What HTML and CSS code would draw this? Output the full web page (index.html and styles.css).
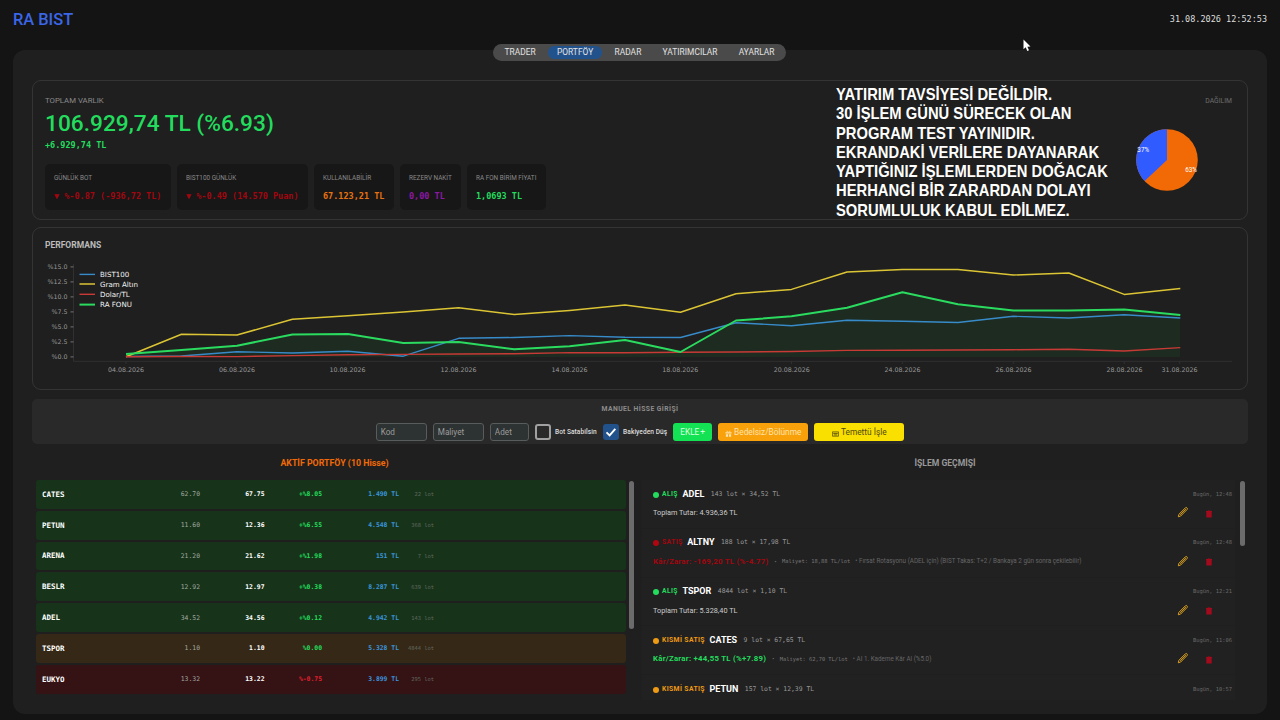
FILE: index.html
```html
<!DOCTYPE html>
<html lang="tr">
<head>
  <meta charset="UTF-8" />
  <meta name="viewport" content="width=device-width, initial-scale=1.0"/>
  <title>RA BIST</title>
  <link rel="stylesheet" href="styles.css">
</head>
<body>

<!-- shared icons -->
<svg class="sprite" aria-hidden="true">
  <symbol id="pencil" viewBox="0 0 12 12">
    <path d="M1.3 10.8 L1.9 8.3 L8.4 1.8 Q9.2 1.1 10 1.9 Q10.8 2.7 10.1 3.5 L3.7 10 Z M3.2 8.7 L8.9 3" fill="none" stroke="#d9a01e" stroke-width="1" stroke-linejoin="round"/>
  </symbol>
  <symbol id="trash" viewBox="0 0 8 8">
    <path d="M1 1 H2.6 V0.4 H5.4 V1 H7 V2 H6.7 V7.4 H1.3 V2 H1 Z" fill="#a30b1c"/>
  </symbol>
</svg>

<header>
  <h1>RA BIST</h1>
  <span class="clock">31.08.2026 12:52:53</span>
</header>

<main class="panel">
  <nav class="tabs">
    <a>TRADER</a>
    <a class="active">PORTFÖY</a>
    <a>RADAR</a>
    <a>YATIRIMCILAR</a>
    <a>AYARLAR</a>
  </nav>

  <section class="card summary">
    <div class="totals">
      <div class="caption">TOPLAM VARLIK</div>
      <div class="total">106.929,74 TL (%6.93)</div>
      <div class="gain">+6.929,74 TL</div>
      <div class="tiles">
        <div class="tile"><span>GÜNLÜK BOT</span><b class="down">▼ %-0.87 (-936,72 TL)</b></div>
        <div class="tile"><span>BIST100 GÜNLÜK</span><b class="down">▼ %-0.49 (14.570 Puan)</b></div>
        <div class="tile"><span>KULLANILABİLİR</span><b class="cash">67.123,21 TL</b></div>
        <div class="tile"><span>REZERV NAKİT</span><b class="reserve">0,00 TL</b></div>
        <div class="tile"><span>RA FON BİRİM FİYATI</span><b class="up">1,0693 TL</b></div>
      </div>
    </div>
    <div class="notice">
      <p>YATIRIM TAVSİYESİ DEĞİLDİR.</p>
      <p>30 İŞLEM GÜNÜ SÜRECEK OLAN</p>
      <p>PROGRAM TEST YAYINIDIR.</p>
      <p>EKRANDAKİ VERİLERE DAYANARAK</p>
      <p>YAPTIĞINIZ İŞLEMLERDEN DOĞACAK</p>
      <p>HERHANGİ BİR ZARARDAN DOLAYI</p>
      <p>SORUMLULUK KABUL EDİLMEZ.</p>
    </div>
    <div class="share">
      <div class="share-title">DAĞILIM</div>
      <svg class="pie" viewBox="-31 -31 62 62">
        <circle r="30.8" fill="#f26a05"/>
        <path d="M0 0 L0 -30.8 A30.8 30.8 0 0 0 -22.4 21.1 Z" fill="#2f5bff"/>
        <text x="-23.8" y="-8.4">37%</text>
        <text x="24" y="12.2">63%</text>
      </svg>
    </div>
  </section>

  <section class="card performance">
    <h2>PERFORMANS</h2>
    <svg class="chart" viewBox="45 258 1190 120">
      <path class="axis" d="M73.5 264 V361.3 H1232"/>
      <path class="ticks" d="M70.5 266.9h3M70.5 281.9h3M70.5 296.9h3M70.5 311.9h3M70.5 326.9h3M70.5 341.9h3M70.5 356.9h3"/>
      <path class="axis" d="M126 361v3M237 361v3M348 361v3M458.7 361v3M569.6 361v3M680.5 361v3M791.5 361v3M902.4 361v3M1013.3 361v3M1124.2 361v3M1179.7 361v3"/>
      <g class="ylabels">
        <text x="67.5" y="269.3">%15.0</text>
        <text x="67.5" y="284.3">%12.5</text>
        <text x="67.5" y="299.3">%10.0</text>
        <text x="67.5" y="314.3">%7.5</text>
        <text x="67.5" y="329.3">%5.0</text>
        <text x="67.5" y="344.3">%2.5</text>
        <text x="67.5" y="359.3">%0.0</text>
      </g>
      <g class="xlabels">
        <text x="126" y="371.9">04.08.2026</text>
        <text x="237" y="371.9">06.08.2026</text>
        <text x="347.5" y="371.9">10.08.2026</text>
        <text x="458.5" y="371.9">12.08.2026</text>
        <text x="569.5" y="371.9">14.08.2026</text>
        <text x="680.3" y="371.9">18.08.2026</text>
        <text x="791.7" y="371.9">20.08.2026</text>
        <text x="902.5" y="371.9">24.08.2026</text>
        <text x="1013.5" y="371.9">26.08.2026</text>
        <text x="1124.5" y="371.9">28.08.2026</text>
        <text x="1179.5" y="371.9">31.08.2026</text>
      </g>
      <path class="area" d="M126 354 L181.5 350 237 345.8 292.4 334.4 347.9 334 403.3 343 458.7 342 514.2 349.3 569.6 346.3 625 340 680.5 352 736 320.5 791.5 316.3 847 307.8 902.4 292.3 957.9 304.3 1013.3 310.5 1068.8 310.5 1124.2 309.5 1180.3 315 V357 H126 Z"/>
      <polyline class="bist" points="126,356.5 181.5,356 237,351.7 292.4,353 347.9,351.3 403.3,356.2 458.7,338.3 514.2,337.5 569.6,335.6 625,337.3 680.5,337.5 736,322.7 791.5,325.7 847,320.3 902.4,321.3 957.9,322.5 1013.3,316.3 1068.8,318 1124.2,314.7 1180.3,318"/>
      <polyline class="gold" points="126,356.7 181.5,334.2 237,335 292.4,319.3 347.9,315.7 403.3,312 458.7,307.8 514.2,314.5 569.6,310.4 625,305.1 680.5,312.3 736,293.8 791.5,289.4 847,272 902.4,269.5 957.9,269.5 1013.3,275 1068.8,273 1124.2,294.4 1180.3,288.5"/>
      <polyline class="dollar" points="126,356.7 181.5,356.5 237,356.6 292.4,355.6 347.9,354.8 403.3,354.4 458.7,354 514.2,353.8 569.6,352.6 625,352.7 680.5,352.3 736,352 791.5,351.5 847,350.4 902.4,350.3 957.9,350 1013.3,349.7 1068.8,349.3 1124.2,351 1180.3,347.6"/>
      <polyline class="fund" points="126,354 181.5,350 237,345.8 292.4,334.4 347.9,334 403.3,343 458.7,342 514.2,349.3 569.6,346.3 625,340 680.5,352 736,320.5 791.5,316.3 847,307.8 902.4,292.3 957.9,304.3 1013.3,310.5 1068.8,310.5 1124.2,309.5 1180.3,315"/>
      <g class="legend">
        <path class="bist" d="M79.5 274.4h15.5"/><text x="100" y="277">BIST100</text>
        <path class="gold" d="M79.5 284h15.5"/><text x="100" y="286.8">Gram Altın</text>
        <path class="dollar" d="M79.5 294.3h15.5"/><text x="100" y="297">Dolar/TL</text>
        <path class="fund" d="M79.5 304.6h15.5"/><text x="100" y="307.2">RA FONU</text>
      </g>
    </svg>
  </section>

  <section class="manual">
    <h3>MANUEL HİSSE GİRİŞİ</h3>
    <form>
      <input type="text" placeholder="Kod">
      <input type="text" placeholder="Maliyet">
      <input type="text" class="short" placeholder="Adet">
      <label class="check"><i></i>Bot Satabilsin</label>
      <label class="check checked"><i><svg viewBox="0 0 16 16"><path d="M3.5 8.4 L6.6 11.4 L12.3 4.8" fill="none" stroke="#fff" stroke-width="1.9"/></svg></i>Bakiyeden Düş</label>
      <button type="button" class="add">EKLE<em>+</em></button>
      <button type="button" class="split"><svg viewBox="0 0 8 8"><path d="M0.5 2.5h7v1.6h-7zM1 4.8h2.5v3H1zM4.5 4.8H7v3H4.5zM2 0.5l2 1.4 2-1.4v1.4H2z" fill="#ffe3b0"/></svg>Bedelsiz/Bölünme</button>
      <button type="button" class="dividend"><svg viewBox="0 0 8 8"><path d="M0.4 2.2h7.2v4.8H0.4z" fill="none" stroke="#50480a" stroke-width="0.9"/><path d="M1.4 4h5.2M2 5.6h4" stroke="#50480a" stroke-width="0.9"/></svg>Temettü İşle</button>
    </form>
  </section>

  <div class="columns">
    <section class="portfolio">
      <h3>AKTİF PORTFÖY (10 Hisse)</h3>
      <div class="scroll">
        <div class="rows">
          <div class="row"><b>CATES</b><span>62.70</span><strong>67.75</strong><em>+%8.05</em><i>1.490 TL</i><small>22 lot</small></div>
          <div class="row"><b>PETUN</b><span>11.60</span><strong>12.36</strong><em>+%6.55</em><i>4.548 TL</i><small>368 lot</small></div>
          <div class="row"><b>ARENA</b><span>21.20</span><strong>21.62</strong><em>+%1.98</em><i>151 TL</i><small>7 lot</small></div>
          <div class="row"><b>BESLR</b><span>12.92</span><strong>12.97</strong><em>+%0.38</em><i>8.287 TL</i><small>639 lot</small></div>
          <div class="row"><b>ADEL</b><span>34.52</span><strong>34.56</strong><em>+%0.12</em><i>4.942 TL</i><small>143 lot</small></div>
          <div class="row flat"><b>TSPOR</b><span>1.10</span><strong>1.10</strong><em>%0.00</em><i>5.328 TL</i><small>4844 lot</small></div>
          <div class="row loss"><b>EUKYO</b><span>13.32</span><strong>13.22</strong><em>%-0.75</em><i>3.899 TL</i><small>295 lot</small></div>
        </div>
        <div class="bar"></div>
      </div>
    </section>

    <section class="history">
      <h3>İŞLEM GEÇMİŞİ</h3>
      <div class="scroll">
        <div class="trades">
          <div class="trade buy">
            <div class="head"><i class="dot"></i><span class="kind">ALIŞ</span><b>ADEL</b><span class="qty">143 lot × 34,52 TL</span><time>Bugün, 12:48</time></div>
            <div class="detail"><span class="sum">Toplam Tutar: 4.936,36 TL</span><div class="tools"><svg class="pencil"><use href="#pencil"/></svg><svg class="trash"><use href="#trash"/></svg></div></div>
          </div>
          <div class="trade sell">
            <div class="head"><i class="dot"></i><span class="kind">SATIŞ</span><b>ALTNY</b><span class="qty">188 lot × 17,98 TL</span><time>Bugün, 12:48</time></div>
            <div class="detail"><span class="profit">Kâr/Zarar: -169,20 TL (%-4.77)</span><span class="sep">•</span><span class="cost">Maliyet: 18,88 TL/lot</span><span class="note">• Fırsat Rotasyonu (ADEL için) (BIST Takas: T+2 / Bankaya 2 gün sonra çekilebilir)</span><div class="tools"><svg class="pencil"><use href="#pencil"/></svg><svg class="trash"><use href="#trash"/></svg></div></div>
          </div>
          <div class="trade buy">
            <div class="head"><i class="dot"></i><span class="kind">ALIŞ</span><b>TSPOR</b><span class="qty">4844 lot × 1,10 TL</span><time>Bugün, 12:21</time></div>
            <div class="detail"><span class="sum">Toplam Tutar: 5.328,40 TL</span><div class="tools"><svg class="pencil"><use href="#pencil"/></svg><svg class="trash"><use href="#trash"/></svg></div></div>
          </div>
          <div class="trade partial">
            <div class="head"><i class="dot"></i><span class="kind">KISMİ SATIŞ</span><b>CATES</b><span class="qty">9 lot × 67,65 TL</span><time>Bugün, 11:06</time></div>
            <div class="detail"><span class="profit">Kâr/Zarar: +44,55 TL (%+7.89)</span><span class="sep">•</span><span class="cost">Maliyet: 62,70 TL/lot</span><span class="note">• AI 1. Kademe Kâr Al (%5.0)</span><div class="tools"><svg class="pencil"><use href="#pencil"/></svg><svg class="trash"><use href="#trash"/></svg></div></div>
          </div>
          <div class="trade partial">
            <div class="head"><i class="dot"></i><span class="kind">KISMİ SATIŞ</span><b>PETUN</b><span class="qty">157 lot × 12,39 TL</span><time>Bugün, 10:57</time></div>
          </div>
        </div>
        <div class="bar"></div>
      </div>
    </section>
  </div>
</main>

<svg class="cursor" viewBox="0 0 9 13"><path d="M0.5 0.5 V10.2 L2.7 8.3 L4.3 12 L6 11.3 L4.4 7.7 L7.5 7.5 Z" fill="#fff"/></svg>

</body>
</html>
```

FILE: styles.css
```css
* {
  box-sizing: border-box;
}
body {
  margin: 0;
  height: 720px;
  overflow: hidden;
  background: #141414;
  color: #eee;
  font-family: Roboto, "Liberation Sans", sans-serif;
  font-size: 8px;
}
h1, h2, h3, p {
  margin: 0;
}
em, i {
  font-style: normal;
}
.sprite {
  display: none;
}
header {
  height: 50px;
  padding: 9px 13px 0;
  display: flex;
  justify-content: space-between;
}
h1 {
  font-size: 16.4px;
  line-height: 21px;
  font-weight: 500;
  color: #3b66e8;
}
.clock {
  font-family: "DejaVu Sans Mono", monospace;
  font-size: 8.5px;
  line-height: 20px;
  color: #ddd;
}
.panel {
  display: flow-root;
  height: 664px;
  margin: 0 13px;
  padding: 0 19px;
  background: #1f1f1f;
  border-radius: 12px;
}

/* tabs */
.tabs {
  width: 293px;
  height: 17px;
  margin: -6px 0 19px 461px;
  padding: 2px;
  display: flex;
  justify-content: center;
  gap: 4px;
  background: #4a4a4a;
  border-radius: 9px;
}
.tabs a {
  padding: 0 8.6px;
  font-size: 8.4px;
  line-height: 13px;
  letter-spacing: 0.04px;
  color: #e2e2e2;
  border-radius: 6px;
}
.tabs .active {
  background: #22528c;
}

/* cards */
.card {
  width: 1215.5px;
  border: 1px solid #343434;
  border-radius: 9px;
}
.summary {
  height: 140px;
  display: flex;
}
.totals {
  width: 803px;
  padding: 14px 0 0 12px;
}
.caption {
  font-size: 7.8px;
  line-height: 11px;
  color: #8a8a8a;
}
.total {
  margin-top: 4px;
  font-size: 22.7px;
  line-height: 27px;
  font-weight: 500;
  color: #23dc5d;
}
.gain {
  margin-top: 3px;
  font-family: "DejaVu Sans Mono", monospace;
  font-size: 8.5px;
  line-height: 11px;
  font-weight: bold;
  color: #23dc5d;
}
.tiles {
  margin-top: 13px;
  display: grid;
  grid-template-columns: 126px 131px 80px 61px 79px;
  gap: 6px;
}
.tile {
  height: 46px;
  padding: 9px 0 0 9px;
  background: #171717;
  border-radius: 5px;
  white-space: nowrap;
}
.tile span {
  display: block;
  font-size: 6.4px;
  line-height: 10px;
  color: #8a8a8a;
}
.tile b {
  display: block;
  margin-top: 8px;
  font-family: "DejaVu Sans Mono", monospace;
  font-size: 8.5px;
  line-height: 10px;
}
.tile .down {
  color: #a3060f;
}
.tile .cash {
  color: #e8720f;
}
.tile .reserve {
  color: #8d18a5;
}
.tile .up {
  color: #23dc5d;
}
.notice {
  width: 300px;
  padding-top: 4px;
  font-family: "Liberation Sans", Arial, sans-serif;
  font-size: 16.5px;
  line-height: 19.3px;
  font-weight: bold;
  color: #fff;
  white-space: nowrap;
  transform: scaleX(0.895);
  transform-origin: left;
}
.share {
  width: 96px;
  padding-top: 15px;
}
.share-title {
  font-size: 6.8px;
  line-height: 10px;
  color: #6e6e6e;
  text-align: right;
}
.pie {
  display: block;
  width: 62px;
  height: 62px;
  margin: 23px 0 0 -0.5px;
}
.pie text {
  font-size: 6.3px;
  text-anchor: middle;
  fill: #fff;
}

/* performance chart */
.performance {
  height: 163px;
  margin-top: 7px;
  padding: 11px 12px 0;
}
h2 {
  font-size: 8.5px;
  line-height: 12px;
  color: #bbb;
}
.chart {
  display: block;
  width: 1190px;
  height: 120px;
  margin-top: 7px;
}
.chart text {
  font-family: "DejaVu Sans", sans-serif;
  font-size: 6.3px;
  fill: #999;
}
.chart .ylabels text {
  text-anchor: end;
}
.chart .xlabels text {
  text-anchor: middle;
}
.chart .legend text {
  font-size: 7.1px;
  fill: #f2f2f2;
}
.chart polyline {
  fill: none;
  stroke-linejoin: round;
}
.axis {
  fill: none;
  stroke: #303030;
}
.ticks {
  stroke: #888;
  stroke-width: 0.8;
}
.area {
  fill: #1d2b20;
}
.bist {
  stroke: #388bc9;
  stroke-width: 1.4;
}
.gold {
  stroke: #dcc534;
  stroke-width: 1.5;
}
.dollar {
  stroke: #c83a36;
  stroke-width: 1.4;
}
.fund {
  stroke: #2bdb5f;
  stroke-width: 2;
}

/* manual entry */
.manual {
  width: 1216px;
  height: 45px;
  margin-top: 9px;
  padding-top: 5px;
  background: #292929;
  border-radius: 5px;
}
.manual h3 {
  font-size: 6.8px;
  line-height: 11px;
  letter-spacing: 0.42px;
  text-align: center;
  color: #8c8c8c;
}
form {
  margin-top: 8px;
  display: flex;
  justify-content: center;
  gap: 6.1px;
}
input {
  width: 51px;
  height: 18px;
  padding: 0 4px;
  background: #2d3232;
  border: 1px solid #585c5c;
  border-radius: 3px;
  font: 8.2px Roboto, sans-serif;
}
input::placeholder {
  color: #9c9c9c;
}
.short {
  width: 39px;
}
.check {
  width: 62px;
  display: flex;
  align-items: center;
  gap: 4px;
  font-size: 6.6px;
  letter-spacing: 0.06px;
  font-weight: 500;
  color: #ddd;
  white-space: nowrap;
}
.check i {
  flex: none;
  width: 16px;
  height: 16px;
  border: 2px solid #a0a0a0;
  border-radius: 3px;
}
.checked {
  width: 64px;
}
.checked i {
  border: 0;
  background: #22528c;
}
.check svg {
  display: block;
  width: 16px;
  height: 16px;
}
button {
  width: 90px;
  height: 18px;
  padding: 0;
  display: flex;
  align-items: center;
  justify-content: center;
  gap: 2px;
  border: 0;
  border-radius: 3px;
  font: 8.3px Roboto, sans-serif;
}
button svg {
  width: 7px;
  height: 7px;
  margin-top: 2px;
}
.add {
  width: 39px;
  gap: 1px;
  background: #14e255;
  color: #d9ffdf;
}
.split {
  background: #f9a10a;
  color: #ffe3b0;
}
.dividend {
  background: #f9e000;
  color: #50480a;
}

/* lists */
.columns {
  display: flex;
  margin-top: 12px;
}
.columns h3 {
  font-size: 8.6px;
  line-height: 14px;
  text-align: center;
}
.scroll {
  display: flex;
}
.portfolio {
  width: 604px;
  padding-left: 4px;
}
.columns .portfolio h3 {
  padding-right: 3px;
  font-size: 8.8px;
  color: #f26a05;
}
.portfolio .scroll,
.history .scroll {
  margin-top: 10px;
}
.rows {
  width: 590px;
}
.row {
  height: 28.8px;
  margin-bottom: 2px;
  padding-left: 6px;
  display: grid;
  grid-template-columns: 94px 64px 64.5px 57.5px 77px 35px;
  align-items: center;
  text-align: right;
  background: #17341a;
  border-radius: 3px;
  font-family: "DejaVu Sans Mono", monospace;
  font-size: 6.4px;
  font-weight: bold;
  color: #23dc5d;
}
.row b {
  text-align: left;
  font-size: 7.5px;
  color: #fff;
}
.row span {
  font-weight: normal;
  color: #a0a8a0;
}
.row strong {
  color: #fff;
}
.row i {
  color: #3a95db;
}
.row small {
  font-size: 5.4px;
  font-weight: normal;
  color: #60685f;
}
.flat {
  background: #352816;
}
.loss {
  background: #351214;
}
.loss em {
  color: #e0202f;
}
.bar {
  width: 5px;
  height: 148px;
  margin: 1px 0 0 3px;
  background: #6b6b6b;
  border-radius: 3px;
}
.history {
  width: 612px;
  padding-left: 6px;
}
.history h3 {
  color: #999;
}
.history .bar {
  height: 65px;
  margin-left: 5px;
}
.trades {
  width: 593px;
  height: 220px;
  overflow: hidden;
}
.trade {
  height: 47.75px;
  margin-bottom: 1px;
  padding: 7px 0 0 11px;
  background: #212121;
}
.head {
  height: 13px;
  display: flex;
  align-items: center;
}
.dot {
  width: 6px;
  height: 6px;
  margin: 2px 3px 0 0;
  border-radius: 50%;
}
.kind {
  margin-right: 4.6px;
  font-size: 6.8px;
  font-weight: bold;
  letter-spacing: 0.37px;
}
.head b {
  font-size: 9px;
  color: #fff;
}
.qty {
  margin-left: 6.5px;
  font-family: "DejaVu Sans Mono", monospace;
  font-size: 6.4px;
  color: #999;
}
time {
  margin-left: auto;
  margin-right: 3px;
  font-family: "DejaVu Sans Mono", monospace;
  font-size: 5.4px;
  color: #6a6a6a;
}
.detail {
  height: 13px;
  margin-top: 6px;
  display: flex;
  align-items: center;
  font-size: 7.3px;
  white-space: nowrap;
  color: #ccc;
}
.profit {
  font-size: 7.8px;
  font-weight: bold;
  letter-spacing: 0.26px;
}
.sep {
  margin: 0 5.5px 0 6px;
  font-size: 6px;
  color: #777;
}
.cost {
  font-family: "DejaVu Sans Mono", monospace;
  font-size: 5.4px;
  color: #777;
}
.note {
  margin-left: 5px;
  font-size: 6.3px;
  color: #666;
}
.tools {
  margin-left: auto;
  margin-right: 22px;
  display: flex;
  align-items: center;
  gap: 16px;
}
.pencil {
  width: 12px;
  height: 12px;
  margin-top: -1px;
}
.trash {
  width: 8px;
  height: 8px;
  margin-top: 2px;
}
.buy .dot {
  background: #23dc5d;
}
.buy .kind {
  color: #23dc5d;
}
.sell .dot {
  background: #b0060f;
}
.sell .kind,
.sell .profit {
  color: #a3060f;
}
.partial .dot {
  background: #ee9a14;
}
.partial .kind {
  color: #ee9a14;
}
.partial .profit {
  color: #23dc5d;
}

.cursor {
  position: absolute;
  left: 1023px;
  top: 39px;
  width: 9px;
  height: 13px;
}
```
